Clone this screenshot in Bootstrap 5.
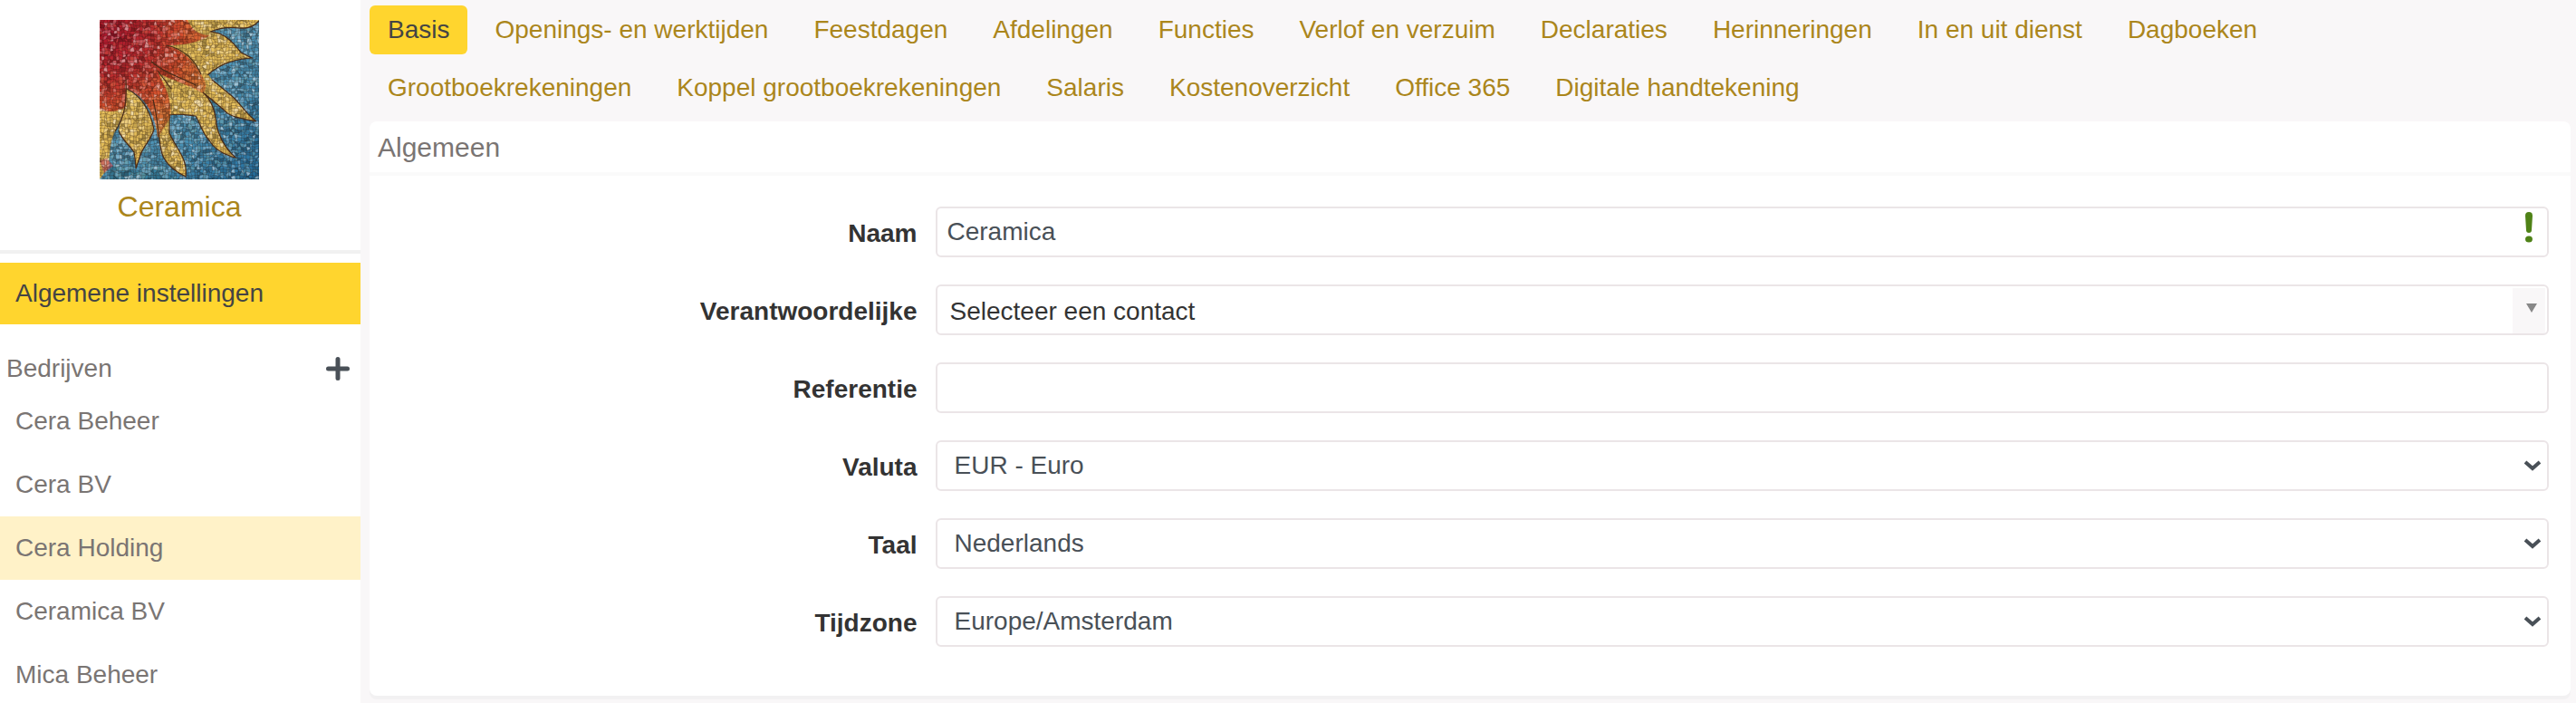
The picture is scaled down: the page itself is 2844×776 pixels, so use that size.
<!DOCTYPE html>
<html lang="nl">
<head>
<meta charset="utf-8">
<meta name="viewport" content="width=device-width, initial-scale=1">
<title>Algemene instellingen</title>
<link href="https://cdn.jsdelivr.net/npm/bootstrap@5.3.0/dist/css/bootstrap.min.css" rel="stylesheet">
<style>
  body { font-family: "Liberation Sans", Arial, sans-serif; font-size: 28px; line-height: 42px; background: #f9f7f8; color: #333; }
  .sidebar { width: 398px; background: #fff; color: #7a7573; }
  .brand { color: #ab861c; font-size: 32px; line-height: 48px; padding: 22px 2px 24px 0; border-bottom: 4px solid #f1f1f1; gap: 6px; }
  .brand svg { width: 176px; height: 176px; }
  .side-link { color: inherit; padding: 14px 17px; }
  .side-link:hover, .side-link.hovered { background: #fff2c8; }
  .side-link.active { background: #ffd52e; color: #444; padding: 13px 17px; margin-top: 10px; }
  .side-head { padding: 28px 12px 2px 7px; }
  .add-btn { width: 26px; height: 26px; }
  .content { padding: 6px 6px 4px 10px; }
  .tabs { gap: 10px; }
  .tabs .nav-link { color: #ab861c; padding: 6px 20px; border-radius: 6px; }
  .tabs .nav-link.active { background: #ffd52e; color: #444; }
  .panel { margin-top: 10px; border: 0; border-radius: 8px; box-shadow: 0 4px 0 #f2f1f2; }
  .panel-title { font-size: 30px; line-height: 42px; color: #7a7573; padding: 8px 9px 6px; border-bottom: 4px solid #fafafa; font-weight: 400; }
  .panel-body { padding: 34px 24px 54px; }
  .panel-body form { gap: 30px; }
  .panel-body .row { --bs-gutter-x: 20px; }
  .panel-body label { padding-top: 9px; line-height: 42px; font-weight: 700; }
  .field { height: 56px; border: 2px solid #ebe5e7; border-radius: 6px; font-size: 28px; line-height: 42px; padding: 4px 11px; color: #495057; }
  select.field { padding: 4px 80px 4px 19px; background: #fff url("data:image/svg+xml,%3Csvg xmlns='http://www.w3.org/2000/svg' width='20' height='14'%3E%3Cpath d='M2 3l8 7 8-7' fill='none' stroke='%23495057' stroke-width='4'/%3E%3C/svg%3E") no-repeat right 6px center / 20px 14px; }
  select.contact { color: #333; padding: 6px 80px 2px 14px; background: #fff url("data:image/svg+xml,%3Csvg xmlns='http://www.w3.org/2000/svg' width='36' height='50'%3E%3Cpath d='M0 0h36v50H0z' fill='%23f9f7f8'/%3E%3Cpath d='M15 17h12l-6 10z' fill='%23888'/%3E%3C/svg%3E") no-repeat right 2px bottom / 36px 50px; }
  .required { right: 18px; top: 6px; width: 8px; height: 34px; pointer-events: none; }
</style>
</head>
<body>
<div class="d-flex vh-100 overflow-hidden">
  <aside class="sidebar flex-shrink-0 overflow-hidden">
    <a href="#" class="brand d-flex flex-column align-items-center text-decoration-none">
      <svg viewBox="0 0 176 176" role="img" aria-label="Mozaïek van een zon">
        <defs>
          <linearGradient id="sea" x2="1" y2="1"><stop offset="0" stop-color="#6cabc5"/><stop offset=".65" stop-color="#4a93b8"/><stop offset="1" stop-color="#2270a2"/></linearGradient>
          <radialGradient id="sun" gradientUnits="userSpaceOnUse" cx="10" cy="15" r="120"><stop offset="0" stop-color="#b3162e"/><stop offset=".4" stop-color="#c22e30"/><stop offset=".7" stop-color="#da532f"/><stop offset="1" stop-color="#dc803a"/></radialGradient>
        </defs>
        <path fill="url(#sea)" d="M0 0h176v176H0z"/>
        <g fill="#e8c05a">
          <path d="M80 0h96c-5 6-12 10-22 9-13-2-22 0-32 4 17 1 26 13 34 23l12 6c-20 1-36 7-49 19L72 58z"/>
          <path d="M64 48c26-8 50 0 60 18l22 18c10 9 16 20 27 28-15-3-30-5-35-12l-24-20c9 8 14 20 15 36 3 14 10 26 21 36-13-3-23-9-29-19-10-12-10-20-15-27-9-1-17-3-29-1v20c8 18 21 29 18 48-11-5-22-14-26-25-5-18-4-38-10-60z"/>
          <path d="M30 76c16 8 26 25 30 45-4 12-12 19-15 28l-5 15c0-6-1-12-2-18-5-8-13-13-17-24z"/>
          <path d="M0 80h29c0 19-6 32-12 43-6 12-6 27-7 39L0 176z"/>
        </g>
        <path fill="url(#sun)" d="M0 0h97c5 12 14 17 25 17C107 26 91 28 74 28c16 4 30 17 38 32 6 9 7 15 2 21-17-10-33-14-49-22 7 15 15 26 13 49l-14 22c-2-25-14-46-34-54l-1 20c-10 6-20 6-29 3z"/>
        <path fill="#2a7893" d="M14 158l25 9 28-4 19 13H8z" opacity=".5"/>
        <path fill="#c95360" d="M0 155l8-2 7 8-10 8z" opacity=".7"/>
        <g id="tiles"></g>
        <g fill="none" stroke="#4a2b18" stroke-width="1.2">
          <path d="M122 13c17 1 26 13 34 23l12 6c-20 1-36 7-49 19M176 1c-5 6-12 9-22 8-13-2-22 0-32 4"/>
          <path d="M124 66l22 18c10 9 16 20 27 28-15-3-30-5-35-12l-24-20c9 8 14 20 15 36 3 14 10 26 21 36-13-3-23-9-29-19-10-12-10-20-15-27-9-1-17-3-29-1v20c8 18 21 29 18 48-11-5-22-14-26-25-5-18-4-38-10-60"/>
          <path d="M30 76c16 8 26 25 30 45-4 12-12 19-15 28l-5 15c0-6-1-12-2-18-5-8-13-13-17-24"/>
          <path d="M74 28c18 4 31 16 38 32M57 46c16 14 35 18 49 26M29 66c1 20 0 40-12 57M64 56l15 20"/>
        </g>
      </svg>
      <span>Ceramica</span>
    </a>
    <nav class="d-flex flex-column" aria-label="Instellingen">
      <a href="#" class="side-link active text-decoration-none" aria-current="page">Algemene instellingen</a>
      <div class="side-head d-flex align-items-center justify-content-between">
        <span>Bedrijven</span>
        <button type="button" class="add-btn btn p-0 border-0 d-flex" aria-label="Bedrijf toevoegen">
          <svg viewBox="0 0 26 26" width="26" height="26" aria-hidden="true"><path d="M13 2.5v21M2.5 13h21" stroke="#495057" stroke-width="5" stroke-linecap="round"/></svg>
        </button>
      </div>
      <a href="#" class="side-link text-decoration-none">Cera Beheer</a>
      <a href="#" class="side-link text-decoration-none">Cera BV</a>
      <a href="#" class="side-link hovered text-decoration-none">Cera Holding</a>
      <a href="#" class="side-link text-decoration-none">Ceramica BV</a>
      <a href="#" class="side-link text-decoration-none">Mica Beheer</a>
    </nav>
  </aside>

  <main class="content flex-grow-1">
    <nav class="row g-0" aria-label="Onderdelen">
      <div class="col-11">
        <div class="tabs nav nav-pills">
          <a class="nav-link active" aria-current="page" href="#">Basis</a>
          <a class="nav-link" href="#">Openings- en werktijden</a>
          <a class="nav-link" href="#">Feestdagen</a>
          <a class="nav-link" href="#">Afdelingen</a>
          <a class="nav-link" href="#">Functies</a>
          <a class="nav-link" href="#">Verlof en verzuim</a>
          <a class="nav-link" href="#">Declaraties</a>
          <a class="nav-link" href="#">Herinneringen</a>
          <a class="nav-link" href="#">In en uit dienst</a>
          <a class="nav-link" href="#">Dagboeken</a>
          <a class="nav-link" href="#">Grootboekrekeningen</a>
          <a class="nav-link" href="#">Koppel grootboekrekeningen</a>
          <a class="nav-link" href="#">Salaris</a>
          <a class="nav-link" href="#">Kostenoverzicht</a>
          <a class="nav-link" href="#">Office 365</a>
          <a class="nav-link" href="#">Digitale handtekening</a>
        </div>
      </div>
    </nav>

    <section class="panel card">
      <h1 class="panel-title mb-0">Algemeen</h1>
      <div class="panel-body">
        <form class="d-flex flex-column">
          <div class="row">
            <label class="col-3 text-end" for="naam">Naam</label>
            <div class="col-9"><div class="position-relative">
              <input type="text" class="field form-control" id="naam" value="Ceramica" required>
              <svg class="required position-absolute" viewBox="0 0 8 34" aria-hidden="true"><path d="M0 4Q0 0 4 0t4 4L7 20q0 3-3 3t-3-3z" fill="#4f8217"/><ellipse cx="4" cy="30" rx="4" ry="3.5" fill="#4f8217"/></svg>
            </div></div>
          </div>
          <div class="row">
            <label class="col-3 text-end" for="contact">Verantwoordelijke</label>
            <div class="col-9"><select class="field contact form-select" id="contact"><option>Selecteer een contact</option></select></div>
          </div>
          <div class="row">
            <label class="col-3 text-end" for="referentie">Referentie</label>
            <div class="col-9"><input type="text" class="field form-control" id="referentie"></div>
          </div>
          <div class="row">
            <label class="col-3 text-end" for="valuta">Valuta</label>
            <div class="col-9"><select class="field form-select" id="valuta"><option>EUR - Euro</option></select></div>
          </div>
          <div class="row">
            <label class="col-3 text-end" for="taal">Taal</label>
            <div class="col-9"><select class="field form-select" id="taal"><option>Nederlands</option></select></div>
          </div>
          <div class="row">
            <label class="col-3 text-end" for="tijdzone">Tijdzone</label>
            <div class="col-9"><select class="field form-select" id="tijdzone"><option>Europe/Amsterdam</option></select></div>
          </div>
        </form>
      </div>
    </section>
  </main>
</div>
<script src="https://cdn.jsdelivr.net/npm/bootstrap@5.3.0/dist/js/bootstrap.bundle.min.js"></script>
<script>
  // Lay small irregular tiles over the sun: a jittered lattice whose cells get light or dark glazes.
  (function () {
    var seed = 7, step = 3.2, n = 56, pts = [];
    function rnd() { seed = (seed * 16807) % 2147483647; return seed / 2147483647; }
    for (var j = 0; j <= n; j++) {
      pts[j] = [];
      for (var i = 0; i <= n; i++) {
        pts[j][i] = (i * step + (rnd() - .5) * 2.6 - 1).toFixed(1) + ' ' + (j * step + (rnd() - .5) * 2.6 - 1).toFixed(1);
      }
    }
    var glazes = [['#fff', .45], ['#fff', .22], ['#ffe680', .12], ['#000', .02], ['#000', .14], ['#000', .3]];
    var paths = glazes.map(function () { return ''; });
    for (j = 0; j < n; j++) for (i = 0; i < n; i++) {
      var r = rnd(), k = r < .06 ? 0 : r < .24 ? 1 : r < .36 ? 2 : r < .65 ? 3 : r < .88 ? 4 : 5;
      paths[k] += 'M' + pts[j][i] + 'L' + pts[j][i + 1] + 'L' + pts[j + 1][i + 1] + 'L' + pts[j + 1][i] + 'z';
    }
    document.getElementById('tiles').innerHTML = glazes.map(function (g, k) {
      return '<path d="' + paths[k] + '" fill="' + g[0] + '" fill-opacity="' + g[1] + '" stroke="#301c14" stroke-opacity=".25" stroke-width=".6"/>';
    }).join('');
  })();
</script>
</body>
</html>
